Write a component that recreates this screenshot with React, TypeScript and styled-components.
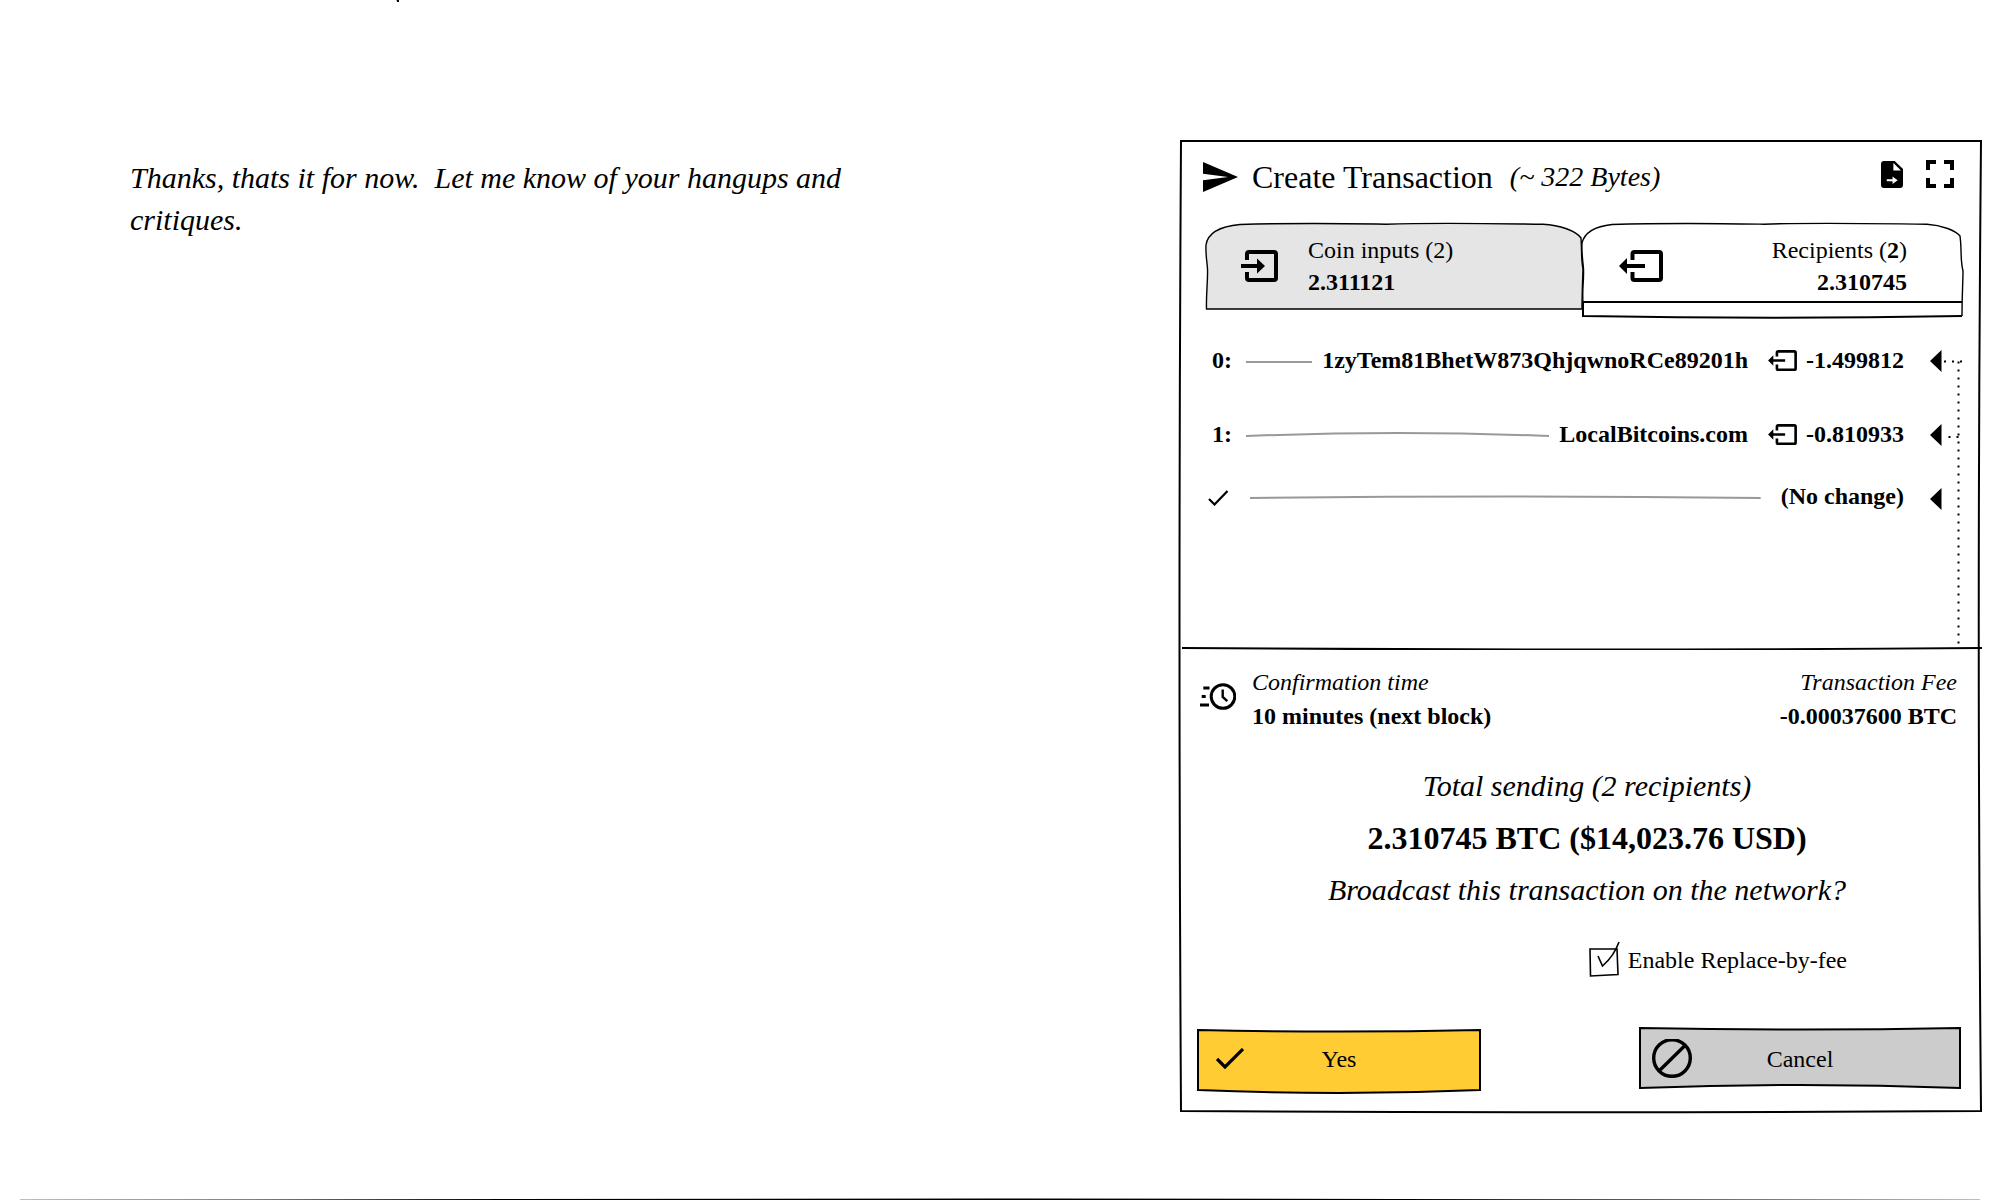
import React, { useState } from "react";
import styled, { createGlobalStyle } from "styled-components";

const GlobalStyle = createGlobalStyle`
  *, *::before, *::after { box-sizing: border-box; }
  body {
    margin: 0;
    background: #fff;
    color: #000;
    font-family: "Liberation Serif", "Times New Roman", Times, serif;
    font-size: 24px;
    line-height: 32px;
  }
  button { font: inherit; color: inherit; background: none; border: 0; padding: 0; cursor: pointer; }
  svg { display: block; flex: none; }
`;

/* ---------- page ---------- */

const Page = styled.div`
  min-height: 100vh;
  display: flex;
  flex-direction: column;
  overflow: hidden;
`;

const StrayMark = styled.svg`
  margin-left: 396px;
`;

const Board = styled.main`
  display: grid;
  grid-template-columns: minmax(0, 760px) minmax(720px, 802px);
  justify-content: space-between;
  align-items: start;
  padding: 138px 18px 0 130px;
`;

const Note = styled.p`
  margin: 17px 0 0;
  font-size: 30px;
  line-height: 42px;
  font-style: italic;
  white-space: pre-wrap;
`;

const NextFrame = styled.svg`
  width: calc(100% - 40px);
  margin: auto 20px 0;
`;

/* ---------- hand-drawn outlines ---------- */

const Outline = styled.svg`
  position: absolute;
  inset: 0;
  width: 100%;
  height: 100%;
  overflow: visible;
  z-index: -1;
  pointer-events: none;

  path { vector-effect: non-scaling-stroke; }
`;

type SketchProps = { w: number; h: number; children: React.ReactNode };

const Sketch = ({ w, h, children }: SketchProps) => (
  <Outline viewBox={`0 0 ${w} ${h}`} preserveAspectRatio="none" fill="none" stroke="#000" strokeWidth={2} aria-hidden="true">
    {children}
  </Outline>
);

/* ---------- dialog ---------- */

const Dialog = styled.section`
  position: relative;
  z-index: 0;
  padding-bottom: 22px;
`;

const Header = styled.header`
  display: flex;
  align-items: center;
  padding: 17px 28px 0 23px;
  line-height: 40px;
`;

const Title = styled.h1`
  margin: 0 17px 0 14px;
  font-size: 32px;
  font-weight: 400;
`;

const Size = styled.span`
  flex: 1;
  font-size: 28px;
  font-style: italic;
`;

const Tools = styled.div`
  display: flex;
  align-items: center;
  gap: 23px;
  padding-bottom: 6px;
`;

const Tabs = styled.div`
  display: grid;
  grid-template-columns: 1fr 1fr;
  align-items: start;
  margin: 26px 20px 0 26px;
`;

const Tab = styled.button<{ $active?: boolean }>`
  position: relative;
  z-index: 0;
  display: flex;
  align-items: center;
  gap: 30px;
  height: ${(p) => (p.$active ? 94 : 86)}px;
  padding: 11px 55px ${(p) => (p.$active ? 19 : 11)}px 35px;
  text-align: ${(p) => (p.$active ? "right" : "left")};
`;

const TabText = styled.span`
  flex: 1;
`;

const Line = styled.span<{ $strong?: boolean }>`
  display: block;
  font-weight: ${(p) => (p.$strong ? 700 : 400)};
`;

/* ---------- outputs ---------- */

const Outputs = styled.div`
  display: flex;
  gap: 26px;
  margin: 27px 18px 0 26px;
  height: 302px;
`;

const OutputList = styled.ul`
  flex: 1;
  min-width: 0;
  margin: 0;
  padding: 0;
  list-style: none;
  font-weight: 700;
`;

const Output = styled.li<{ $space: number }>`
  display: flex;
  align-items: center;
  height: 32px;
  margin-bottom: ${(p) => p.$space}px;
`;

const Index = styled.span`
  display: flex;
  justify-content: center;
  width: 32px;
`;

const LeaderSvg = styled.svg<{ $wide?: boolean }>`
  flex: 1;
  min-width: 0;
  height: 8px;
  margin: ${(p) => (p.$wide ? "0 20px 0 12px" : "0 10px 0 8px")};

  path { vector-effect: non-scaling-stroke; }
`;

const Leader = ({ bend, wide }: { bend: number; wide?: boolean }) => (
  <LeaderSvg $wide={wide} viewBox="0 0 100 8" preserveAspectRatio="none" fill="none" stroke="#999" strokeWidth={2} aria-hidden="true">
    <path d={`M0 6Q50 ${6 - bend} 100 6`} />
  </LeaderSvg>
);

const Amount = styled.span`
  display: flex;
  align-items: center;
  gap: 9px;
  margin-left: 20px;
`;

const Divider = styled.svg`
  width: calc(100% - 2px);
  height: 4px;
  margin-left: 2px;

  path { vector-effect: non-scaling-stroke; }
`;

/* ---------- summary ---------- */

const Facts = styled.div`
  display: flex;
  align-items: center;
  padding: 15px 25px 0 20px;
`;

const Fact = styled.dl<{ $end?: boolean }>`
  margin: 0 0 0 ${(p) => (p.$end ? "auto" : "16px")};
  line-height: 34px;
  text-align: ${(p) => (p.$end ? "right" : "left")};

  dt { font-style: italic; }
  dd { margin: 0; font-weight: 700; }
`;

const Summary = styled.div`
  margin-top: 27px;
  padding-left: 12px;
  text-align: center;
  font-size: 30px;
  line-height: 52px;
  font-style: italic;

  p { margin: 0; }
`;

const Total = styled.p`
  font-size: 32px;
  font-style: normal;
  font-weight: 700;
`;

const Option = styled.label`
  display: flex;
  justify-content: flex-end;
  align-items: center;
  gap: 9px;
  margin-top: 28px;
  padding-right: 135px;
`;

const CheckBox = styled.span`
  position: relative;
  width: 30px;
  height: 32px;

  input {
    appearance: none;
    width: 100%;
    height: 100%;
    margin: 0;
    cursor: pointer;
  }
  svg {
    position: absolute;
    inset: 0;
    overflow: visible;
    pointer-events: none;
  }
`;

const Actions = styled.div`
  display: flex;
  justify-content: space-between;
  margin: 52px 21px 0 17px;
`;

const Action = styled.button<{ $width: number; $inset: number }>`
  position: relative;
  z-index: 0;
  display: grid;
  grid-template-columns: 1fr auto 1fr;
  align-items: center;
  width: ${(p) => p.$width}px;
  height: 62px;
  padding: 0 ${(p) => p.$inset}px;
`;

/* ---------- icons ---------- */

const SendIcon = () => (
  <svg width="35" height="30" viewBox="2 3 21 18" aria-hidden="true">
    <path d="M2.01 21L23 12 2.01 3 2 10l15 2-15 2z" />
  </svg>
);

const FileMoveIcon = () => (
  <svg width="22" height="27" viewBox="4 2 16 20" preserveAspectRatio="none" aria-hidden="true">
    <path d="M14 2H6c-1.1 0-2 .9-2 2v16c0 1.1.9 2 2 2h12c1.1 0 2-.9 2-2V8l-6-6zm-1 7V3.5L18.5 9H13z" />
    <path fill="#fff" d="M8.2 15.6h4.2v-2.2l3.7 2.9-3.7 2.8v-2.1H8.2z" />
  </svg>
);

const FullscreenIcon = () => (
  <svg width="28" height="28" viewBox="5 5 14 14" aria-hidden="true">
    <path d="M7 14H5v5h5v-2H7v-3zm-2-4h2V7h3V5H5v5zm12 7h-3v2h5v-5h-2v3zM14 5v2h3v3h2V5h-5z" />
  </svg>
);

const InputIcon = () => (
  <svg width="37" height="32" viewBox="0 0 37 32" aria-hidden="true">
    <path fill="none" stroke="#000" strokeWidth="4" d="M6 10V4a2 2 0 0 1 2-2H33a2 2 0 0 1 2 2V28a2 2 0 0 1-2 2H8a2 2 0 0 1-2-2V22M0 16H18" />
    <path d="M16 8.5L24 16 16 23.5z" />
  </svg>
);

const OutputIcon = ({ width, height }: { width: number; height: number }) => (
  <svg width={width} height={height} viewBox="0 0 44 32" aria-hidden="true">
    <path fill="none" stroke="#000" strokeWidth="4" d="M13.5 10V4a2 2 0 0 1 2-2H40a2 2 0 0 1 2 2V28a2 2 0 0 1-2 2H15.5a2 2 0 0 1-2-2V22M6 16H26" />
    <path d="M0 16L8 8V24z" />
  </svg>
);

const SmallCheckIcon = () => (
  <svg width="28" height="20" viewBox="0 0 28 20" fill="none" stroke="#000" strokeWidth="2.2" aria-hidden="true">
    <path d="M1 13L6.5 18.5 19.5 5" />
  </svg>
);

const CheckIcon = () => (
  <svg width="28" height="22" viewBox="0 0 28 22" fill="none" stroke="#000" strokeWidth="3.2" aria-hidden="true">
    <path d="M1 11L9 19 27 1" />
  </svg>
);

const CancelIcon = () => (
  <svg width="40" height="40" viewBox="0 0 40 40" fill="none" stroke="#000" strokeWidth="3.4" aria-hidden="true">
    <circle cx="20" cy="19" r="18.3" />
    <path d="M7 32L33 6.5" />
  </svg>
);

const FastClockIcon = () => (
  <svg width="36" height="33" viewBox="0 0 36 33" fill="none" stroke="#000" strokeWidth="3" aria-hidden="true">
    <circle cx="23" cy="13.5" r="11.8" />
    <path strokeWidth="2.4" d="M22.7 6.5V14l4.6 4.2" />
    <path d="M3.3 5H9.5M1.7 13.5H5.7M0 22H9" />
  </svg>
);

/* Arrow heads of the outputs and the dotted wire that joins them. */
const Wire = () => (
  <svg width="34" height="302" viewBox="0 0 34 302" aria-hidden="true">
    <path d="M0 17L11.5 6V28zM0 91L11.5 80V102zM0 155L11.5 144V166z" />
    <path fill="none" stroke="#000" strokeWidth="2" strokeDasharray="2 6" d="M28.5 17.5V302M14 17.5H34M18.5 93H29" />
  </svg>
);

const App = () => {
  const [rbf, setRbf] = useState(true);

  return (
    <>
      <GlobalStyle />
      <Page>
        <StrayMark width="3" height="2" viewBox="0 0 3 2" aria-hidden="true">
          <path fill="#999" d="M0 0h1v1H0z" />
          <path d="M1 0h2v2H1z" />
        </StrayMark>

        <Board>
          <Note>Thanks, thats it for now.  Let me know of your hangups and critiques.</Note>

          <Dialog aria-label="Create Transaction">
            <Sketch w={802} h={972}>
              <path d="M1 1H801Q796.5 486 801 971Q401 973.6 1 971Q-2 486 1 1z" />
            </Sketch>

            <Header>
              <SendIcon />
              <Title>Create Transaction</Title>
              <Size>(~ 322 Bytes)</Size>
              <Tools>
                <button type="button" aria-label="Export"><FileMoveIcon /></button>
                <button type="button" aria-label="Full screen"><FullscreenIcon /></button>
              </Tools>
            </Header>

            <Tabs role="tablist">
              <Tab type="button" role="tab" aria-selected={false}>
                <Sketch w={378} h={86}>
                  <path
                    fill="#e5e5e5"
                    strokeWidth={1.4}
                    d="M0.5 86C0 70 2 58 1.5 46C1 38 -0.5 32 0 22C2 8 18 3 34 1.5C100 -0.5 140 0.5 180 1.2C230 -0.5 280 0.5 337 1.2C354 2 370 8 375 15C376 30 375 36 377 46C376.5 60 376 70 376 86z"
                  />
                </Sketch>
                <InputIcon />
                <TabText>
                  <Line>Coin inputs (2)</Line>
                  <Line $strong>2.311121</Line>
                </TabText>
              </Tab>
              <Tab type="button" role="tab" aria-selected $active>
                <Sketch w={378} h={94}>
                  <path
                    fill="#fff"
                    strokeWidth={1.4}
                    d="M-1 80C-2 66 0 58 -0.5 46C-1 38 -2.5 32 -2 20C1 8 14 3 28 1.5C90 -0.5 140 0.5 180 1.2C230 -0.5 280 0.5 343 1.2C358 2 372 8 376 13C378 28 376 36 379 48C379 60 378 70 378 93"
                  />
                  <path d="M-1 79H378M-1 79V93Q189 96.5 378 93" />
                </Sketch>
                <OutputIcon width={44} height={32} />
                <TabText>
                  <Line>Recipients (<b>2</b>)</Line>
                  <Line $strong>2.310745</Line>
                </TabText>
              </Tab>
            </Tabs>

            <Outputs>
              <OutputList>
                <Output $space={42}>
                  <Index>0:</Index>
                  <Leader bend={0} />
                  <span>1zyTem81BhetW873QhjqwnoRCe89201h</span>
                  <Amount><OutputIcon width={29} height={21} />-1.499812</Amount>
                </Output>
                <Output $space={30}>
                  <Index>1:</Index>
                  <Leader bend={6} />
                  <span>LocalBitcoins.com</span>
                  <Amount><OutputIcon width={29} height={21} />-0.810933</Amount>
                </Output>
                <Output $space={0}>
                  <Index><SmallCheckIcon /></Index>
                  <Leader bend={3} wide />
                  <span>(No change)</span>
                </Output>
              </OutputList>
              <Wire />
            </Outputs>

            <Divider viewBox="0 0 800 4" preserveAspectRatio="none" fill="none" stroke="#000" strokeWidth={2} aria-hidden="true">
              <path d="M0 2Q400 5 800 2" />
            </Divider>

            <Facts>
              <FastClockIcon />
              <Fact>
                <dt>Confirmation time</dt>
                <dd>10 minutes (next block)</dd>
              </Fact>
              <Fact $end>
                <dt>Transaction Fee</dt>
                <dd>-0.00037600 BTC</dd>
              </Fact>
            </Facts>

            <Summary>
              <p>Total sending (2 recipients)</p>
              <Total>2.310745 BTC ($14,023.76 USD)</Total>
              <p>Broadcast this transaction on the network?</p>
            </Summary>

            <Option htmlFor="rbf">
              <CheckBox>
                <input id="rbf" type="checkbox" checked={rbf} onChange={(e) => setRbf(e.target.checked)} />
                <svg width="30" height="32" viewBox="0 0 30 32" fill="none" stroke="#000" strokeWidth="2" aria-hidden="true">
                  <path strokeWidth="1.6" d="M1 5H28L29 30.5 1.5 32z" />
                  {rbf && <path strokeWidth="1.6" d="M9 12L13.5 22Q25 12 30 -2" />}
                </svg>
              </CheckBox>
              Enable Replace-by-fee
            </Option>

            <Actions>
              <Action type="button" $width={284} $inset={19}>
                <Sketch w={284} h={62}>
                  <path fill="#ffcc33" d="M1 2Q142 5 283 2V62Q142 68 1 62z" />
                </Sketch>
                <CheckIcon />
                Yes
              </Action>
              <Action type="button" $width={322} $inset={13}>
                <Sketch w={322} h={62}>
                  <path fill="#cccccc" d="M1 0Q161 3 321 0V60Q161 54 1 60z" />
                </Sketch>
                <CancelIcon />
                Cancel
              </Action>
            </Actions>
          </Dialog>
        </Board>

        <NextFrame height="2" viewBox="0 0 1960 2" preserveAspectRatio="none" fill="none" stroke="#000" strokeWidth={2} aria-hidden="true">
          <path d="M0 2.7Q980 0.3 1960 2.7" />
        </NextFrame>
      </Page>
    </>
  );
};

export default App;
